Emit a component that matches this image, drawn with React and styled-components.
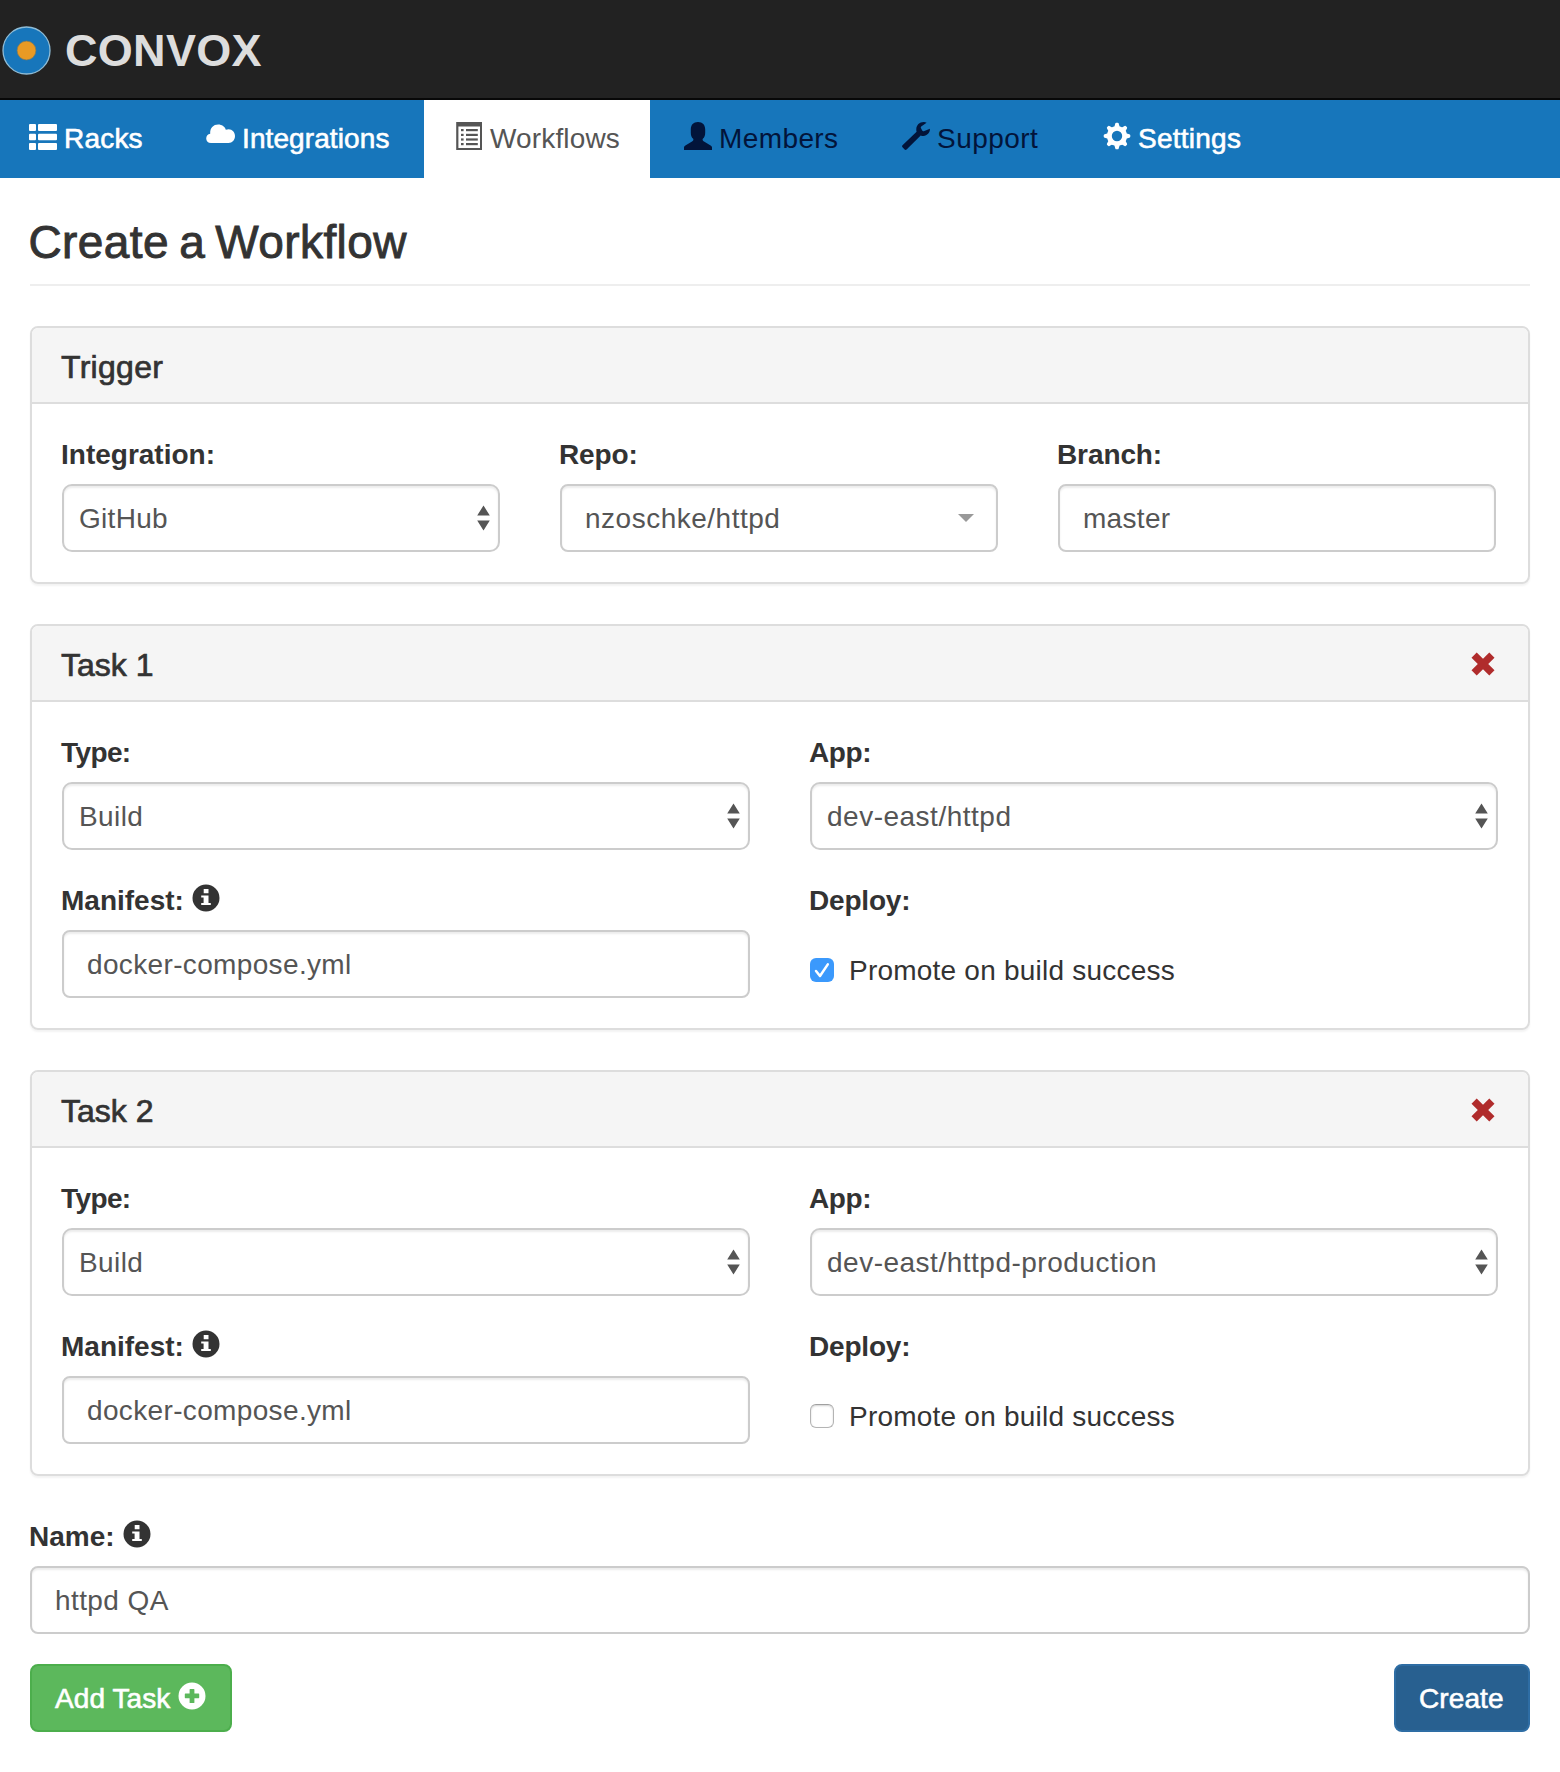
import React, { useState } from "react";
import styled, { createGlobalStyle, css } from "styled-components";

const GlobalStyle = createGlobalStyle`
  *, *::before, *::after { box-sizing: border-box; }
  body {
    margin: 0;
    background: #fff;
    color: #333;
    font-family: "Liberation Sans", Arial, Helvetica, sans-serif;
    font-size: 28px;
    line-height: 40px;
  }
`;

/* ---------- header ---------- */

const Header = styled.header`
  display: flex;
  align-items: center;
  gap: 14px;
  height: 100px;
  padding: 3px 0 0 2px;
  background: #222;
  border-bottom: 2px solid #080808;
`;

const Brand = styled.span`
  color: #ddd;
  font-size: 45px;
  font-weight: bold;
  letter-spacing: 0.3px;
  line-height: 50px;
`;

const LogoMark = styled.svg`
  display: block;
  width: 49px;
  height: 49px;
`;

/* ---------- navigation ---------- */

const Nav = styled.nav`
  display: flex;
  height: 78px;
  background: #1776bb;
`;

const tones = {
  light: css`
    color: #fff;
    -webkit-text-stroke: 0.6px #fff;
  `,
  dark: css`
    color: #02143a;
  `,
  active: css`
    color: #555;
    background: #fff;
  `,
};

const Tab = styled.a`
  display: flex;
  align-items: flex-start;
  gap: ${(p) => p.$gap}px;
  width: ${(p) => p.$width}px;
  padding: 19px 0 0 ${(p) => p.$indent}px;
  letter-spacing: ${(p) => p.$track}px;
  white-space: nowrap;
  text-decoration: none;
  ${(p) => tones[p.$tone]}
`;

const Glyph = styled.svg`
  display: block;
  flex: none;
  width: ${(p) => p.$size || 28}px;
  height: ${(p) => p.$size || 28}px;
  margin-top: ${(p) => p.$drop ?? 3}px;
  fill: currentColor;
  stroke: none;
`;

/* ---------- page ---------- */

const Page = styled.main`
  padding: 0 30px;
`;

const Title = styled.h1`
  height: 108px;
  margin: 0 0 40px;
  padding-top: 39px;
  border-bottom: 2px solid #eee;
  font-size: 46px;
  font-weight: normal;
  letter-spacing: 0.4px;
  line-height: 50px;
  text-indent: -1.5px;
  word-spacing: -3px;
  -webkit-text-stroke: 0.9px #333;
`;

const PanelBox = styled.section`
  margin-bottom: 40px;
  border: 2px solid #ddd;
  border-radius: 8px;
  box-shadow: 0 2px 2px rgba(0, 0, 0, 0.05);
`;

const PanelHead = styled.header`
  display: flex;
  justify-content: space-between;
  align-items: center;
  height: 76px;
  padding: 4px 30px 0 29px;
  border-bottom: 2px solid #ddd;
  border-radius: 6px 6px 0 0;
  background: #f5f5f5;
`;

const PanelTitle = styled.h2`
  margin: 0;
  font-size: 32px;
  font-weight: normal;
  letter-spacing: ${(p) => p.$track || 0}px;
  line-height: 36px;
  -webkit-text-stroke: 0.7px #333;
`;

const RemoveButton = styled.button`
  display: block;
  width: 32px;
  height: 32px;
  margin: 0 -1px 3px 0;
  padding: 0;
  border: 0;
  background: none;
  color: #b02c2c;
`;

const Fields = styled.div`
  display: grid;
  grid-template-columns: repeat(${(p) => p.$columns}, ${(p) => (p.$columns === 3 ? "438px" : "1fr")});
  gap: 30px 60px;
  padding: 30px;
`;

const FieldBox = styled.div`
  display: flex;
  flex-direction: column;
  gap: 10px;
  min-width: 0;
`;

const Label = styled.div`
  display: flex;
  gap: 8px;
  height: 40px;
  margin-left: -1px;
  padding-top: 1px;
  font-weight: bold;
  letter-spacing: ${(p) => p.$track || 0}px;
`;

const controlFrame = css`
  width: 100%;
  height: 68px;
  border: 2px solid #ccc;
  background: #fff;
  box-shadow: inset 0 2px 2px rgba(0, 0, 0, 0.075);
  color: #555;
  letter-spacing: ${(p) => p.$track || 0}px;
`;

const Input = styled.input`
  ${controlFrame}
  padding: 2px 22px 0 23px;
  border-radius: 8px;
  font: inherit;
  outline: none;
`;

const SelectBox = styled.div`
  ${controlFrame}
  display: flex;
  justify-content: space-between;
  align-items: center;
  padding: 0 ${(p) => (p.$combo ? 22 : 8)}px 0 ${(p) => (p.$combo ? 23 : 15)}px;
  border-radius: ${(p) => (p.$combo ? 8 : 10)}px;
`;

const SelectValue = styled.span`
  padding-top: 2px;
`;

const Stepper = styled.svg`
  display: block;
  width: 13px;
  height: 26px;
  fill: #555;
`;

const Caret = styled.span`
  margin-bottom: 1px;
  border: 8px solid transparent;
  border-top-color: #999;
  border-bottom-width: 0;
`;

const CheckRow = styled.label`
  display: flex;
  gap: 15px;
  padding-top: 21px;
  letter-spacing: 0.22px;
`;

const CheckBox = styled.span`
  display: block;
  flex: none;
  width: 24px;
  height: 24px;
  margin-top: 7px;
  border-radius: 6px;
  ${(p) =>
    p.$on
      ? css`
          background: #3b99fc;
        `
      : css`
          border: 1px solid #b4b4b4;
          border-top-color: #a0a0a0;
          background: #fff;
          box-shadow: inset 0 1px 2px rgba(0, 0, 0, 0.18);
        `}
`;

const CheckMark = styled.svg`
  display: block;
  width: 24px;
  height: 24px;
  fill: none;
  stroke: #fff;
  stroke-width: 2.5px;
  stroke-linecap: round;
  stroke-linejoin: round;
`;

const Actions = styled.div`
  display: flex;
  justify-content: space-between;
  margin-top: 30px;
`;

const variants = {
  success: css`
    background: #5cb85c;
    border-color: #4cae4c;
  `,
  primary: css`
    background: #286090;
    border-color: #2e6da4;
  `,
};

const Button = styled.button`
  display: flex;
  justify-content: flex-start;
  gap: 8px;
  width: ${(p) => p.$width}px;
  height: 68px;
  padding: 13px 0 0 23px;
  border: 2px solid;
  border-radius: 8px;
  color: #fff;
  font: inherit;
  letter-spacing: 0.1px;
  white-space: nowrap;
  -webkit-text-stroke: 0.6px #fff;
  ${(p) => variants[p.$variant]}
`;

/* ---------- icons ---------- */

const ListIcon = () => (
  <Glyph viewBox="0 0 28 28" overflow="visible">
    <rect x="1" y="2" width="7" height="7" rx="1" />
    <rect x="1" y="11.7" width="7" height="6.6" rx="1" />
    <rect x="1" y="21" width="7" height="7" rx="1" />
    <rect x="10" y="2" width="19" height="7" rx="1" />
    <rect x="10" y="11.7" width="19" height="6.6" rx="1" />
    <rect x="10" y="21" width="19" height="7" rx="1" />
  </Glyph>
);

const CloudIcon = () => (
  <Glyph viewBox="0 0 28 28" overflow="visible">
    <path d="M5 21 C2 21 0.2 19 0.2 16.4 C0.2 14 1.8 12.2 4.2 11.8 C3.8 6 7.4 2.6 12.2 2.6 C16 2.6 18.8 4.8 19.8 7.8 C24.8 5.8 29 9.4 29 14 C29 18 26.2 21 22.6 21 Z" />
  </Glyph>
);

const ListAltIcon = () => (
  <Glyph viewBox="0 0 28 28">
    <path
      fillRule="evenodd"
      d="M2.2 0 H28 V28 H2.2 Z M4.4 4.6 V26 H26 V4.6 Z"
    />
    {[8, 12.8, 17.4, 22].map((y) => (
      <React.Fragment key={y}>
        <rect x="7" y={y - 1} width="2.6" height="2.2" />
        <rect x="12" y={y - 1} width="11.8" height="2.2" />
      </React.Fragment>
    ))}
  </Glyph>
);

const UserIcon = () => (
  <Glyph viewBox="0 0 28 28">
    <path d="M14 0 C18.6 0 21.2 3 21.2 7.4 V10.4 C21.2 13.6 20.4 15.4 18.8 16.8 C18.2 18 18.8 18.9 20 19.5 L26.6 23.4 C27.6 24 28 24.6 28 25.6 V28 H0 V25.6 C0 24.6 0.4 24 1.4 23.4 L8 19.5 C9.2 18.9 9.8 18 9.2 16.8 C7.6 15.4 6.8 13.6 6.8 10.4 V7.4 C6.8 3 9.4 0 14 0 Z" />
  </Glyph>
);

const WrenchIcon = () => (
  <Glyph viewBox="0 0 28 28">
    <path d="M0.5 23.2 L14.6 9.8 C13.2 4.4 16.6 0 21.8 0 C22.8 0 23.8 0.2 24.6 0.7 L19.2 4.4 C18.7 4.8 18.7 5.4 18.9 5.9 L20.2 8.6 C20.5 9.2 21.2 9.5 21.8 9.2 L27.9 6.8 C28.2 10.4 25.4 13.7 21.4 13.9 C20.4 13.9 19.6 13.8 18.7 13.4 L4.6 27.5 C4 28.1 3.2 28.1 2.6 27.5 L0.5 25.2 C-0.1 24.6 -0.1 23.8 0.5 23.2 Z" />
  </Glyph>
);

const CogIcon = () => (
  <Glyph viewBox="0 0 28 28">
    {[0, 45, 90, 135, 180, 225, 270, 315].map((a) => (
      <path
        key={a}
        transform={`rotate(${a} 14 14)`}
        d="M11 6 L12.3 1.6 Q12.6 0.7 13.4 0.7 H14.6 Q15.4 0.7 15.7 1.6 L17 6 Z"
      />
    ))}
    <path
      fillRule="evenodd"
      d="M14 3.9 A10.1 10.1 0 1 1 14 24.1 A10.1 10.1 0 1 1 14 3.9 Z M14 8.8 A5.2 5.2 0 1 0 14 19.2 A5.2 5.2 0 1 0 14 8.8 Z"
    />
  </Glyph>
);

const InfoIcon = () => (
  <Glyph viewBox="0 0 28 28">
    <path
      fillRule="evenodd"
      d="M14 0.5 A13.5 13.5 0 1 1 14 27.5 A13.5 13.5 0 1 1 14 0.5 Z M11.7 5 V9.2 H16.5 V5 Z M9.2 11.5 V13.6 H11.6 V19 H9.2 V21.1 H18.8 V19 H16.5 V11.5 Z"
    />
  </Glyph>
);

const PlusIcon = () => (
  <Glyph viewBox="0 0 28 28">
    <path
      fillRule="evenodd"
      d="M14 0.5 A13.5 13.5 0 1 1 14 27.5 A13.5 13.5 0 1 1 14 0.5 Z M12.2 7 Q11.6 7 11.6 7.6 V11.6 H7.4 Q6.8 11.6 6.8 12.2 V15.6 Q6.8 16.2 7.4 16.2 H11.6 V20.4 Q11.6 21 12.2 21 H15.8 Q16.4 21 16.4 20.4 V16.2 H20.6 Q21.2 16.2 21.2 15.6 V12.2 Q21.2 11.6 20.6 11.6 H16.4 V7.6 Q16.4 7 15.8 7 Z"
    />
  </Glyph>
);

const RemoveIcon = () => (
  <Glyph viewBox="0 0 32 32" $size={32} $drop={0}>
    <path d="M9.7 4.5 L16 10.8 L22.3 4.5 L27.5 9.7 L21.2 16 L27.5 22.3 L22.3 27.5 L16 21.2 L9.7 27.5 L4.5 22.3 L10.8 16 L4.5 9.7 Z" />
  </Glyph>
);

/* ---------- composed parts ---------- */

const Field = ({ label, track, info, children }) => (
  <FieldBox>
    <Label $track={track}>
      {label}
      {info && <InfoIcon />}
    </Label>
    {children}
  </FieldBox>
);

const Select = ({ value, track = 0.5 }) => (
  <SelectBox $track={track}>
    <SelectValue>{value}</SelectValue>
    <Stepper viewBox="0 0 13 26">
      <path d="M6.5 0.5 L12.8 10.5 H0.2 Z M0.2 15.5 H12.8 L6.5 25.5 Z" />
    </Stepper>
  </SelectBox>
);

const Task = ({ title, app, promote }) => {
  const [on, setOn] = useState(promote);
  return (
    <PanelBox>
      <PanelHead>
        <PanelTitle>{title}</PanelTitle>
        <RemoveButton aria-label="Remove">
          <RemoveIcon />
        </RemoveButton>
      </PanelHead>
      <Fields $columns={2}>
        <Field label="Type:" track={-0.6}>
          <Select value="Build" track={0.4} />
        </Field>
        <Field label="App:" track={-0.4}>
          <Select value={app} />
        </Field>
        <Field label="Manifest:" info>
          <Input defaultValue="docker-compose.yml" $track={0.35} />
        </Field>
        <Field label="Deploy:" track={-0.2}>
          <CheckRow onClick={() => setOn(!on)}>
            <CheckBox $on={on}>
              {on && (
                <CheckMark viewBox="0 0 24 24">
                  <path d="M6 13 L10 18 L17.8 6.4" />
                </CheckMark>
              )}
            </CheckBox>
            Promote on build success
          </CheckRow>
        </Field>
      </Fields>
    </PanelBox>
  );
};

const tabs = [
  { text: "Racks", Icon: ListIcon, tone: "light", width: 176, indent: 28, gap: 8, track: 0.2 },
  { text: "Integrations", Icon: CloudIcon, tone: "light", width: 248, indent: 30, gap: 8, track: 0.1 },
  { text: "Workflows", Icon: ListAltIcon, tone: "active", width: 226, indent: 30, gap: 8, track: 0.15 },
  { text: "Members", Icon: UserIcon, tone: "dark", width: 222, indent: 34, gap: 7, track: 0.4 },
  { text: "Support", Icon: WrenchIcon, tone: "dark", width: 201, indent: 30, gap: 7, track: 0.45 },
  { text: "Settings", Icon: CogIcon, tone: "light", width: 200, indent: 30, gap: 7, track: 0.25 },
];

export default function App() {
  return (
    <>
      <GlobalStyle />
      <Header>
        <LogoMark viewBox="0 0 49 49">
          <circle cx="24.5" cy="24.5" r="23.5" fill="#1776bb" stroke="#8fbcd6" strokeWidth="1.3" />
          <circle cx="24.5" cy="24.5" r="9.4" fill="#e99a24" stroke="#8a7a50" strokeWidth="0.7" />
        </LogoMark>
        <Brand>CONVOX</Brand>
      </Header>
      <Nav>
        {tabs.map(({ text, Icon, tone, width, indent, gap, track }) => (
          <Tab key={text} $tone={tone} $width={width} $indent={indent} $gap={gap} $track={track}>
            <Icon />
            {text}
          </Tab>
        ))}
      </Nav>
      <Page>
        <Title>Create a Workflow</Title>
        <PanelBox>
          <PanelHead>
            <PanelTitle $track={0.3}>Trigger</PanelTitle>
          </PanelHead>
          <Fields $columns={3}>
            <Field label="Integration:">
              <Select value="GitHub" track={0.3} />
            </Field>
            <Field label="Repo:" track={-0.1}>
              <SelectBox $combo $track={0.5}>
                <SelectValue>nzoschke/httpd</SelectValue>
                <Caret />
              </SelectBox>
            </Field>
            <Field label="Branch:" track={-0.1}>
              <Input defaultValue="master" $track={0.3} />
            </Field>
          </Fields>
        </PanelBox>
        <Task title="Task 1" app="dev-east/httpd" promote />
        <Task title="Task 2" app="dev-east/httpd-production" promote={false} />
        <Field label="Name:" info>
          <Input defaultValue="httpd QA" $track={0.4} />
        </Field>
        <Actions>
          <Button $variant="success" $width={202}>
            Add Task
            <PlusIcon />
          </Button>
          <Button $variant="primary" $width={136}>
            Create
          </Button>
        </Actions>
      </Page>
    </>
  );
}
